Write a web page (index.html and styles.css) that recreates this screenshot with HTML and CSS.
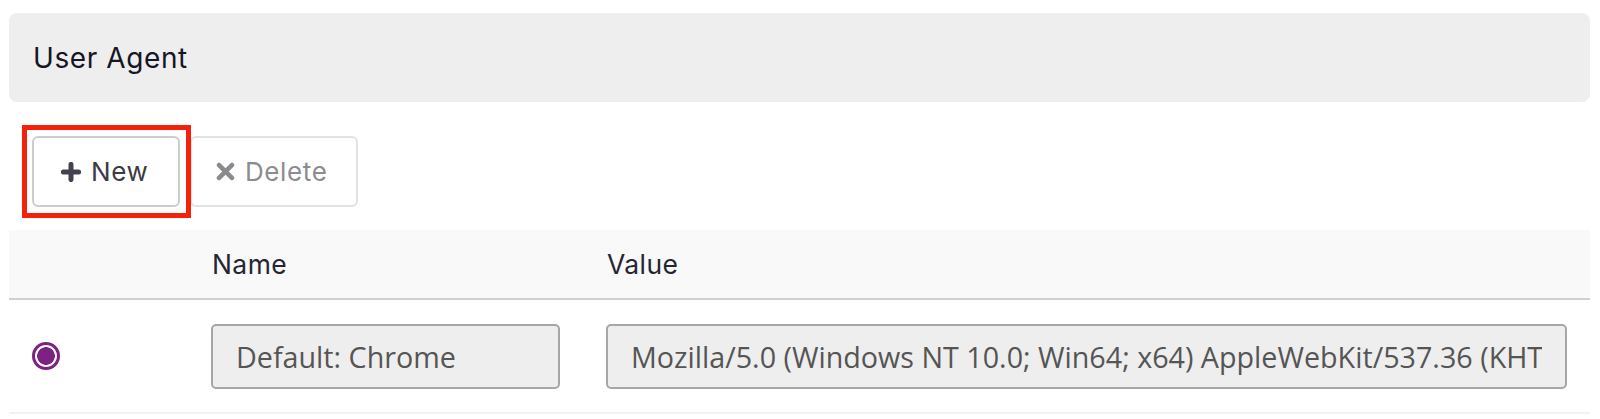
FILE: index.html
```html
<!DOCTYPE html>
<html lang="en">
<head>
<meta charset="utf-8">
<title>User Agent</title>
<link rel="stylesheet" href="styles.css">
</head>
<body>
<div class="page">
  <div class="panel">
    <h2 class="panel-title">User Agent</h2>
  </div>
  <div class="toolbar">
    <button class="btn btn-new" type="button">
      <svg class="icon" viewBox="0 0 20 20" width="20" height="20"><path d="M10 2.4v15.2M2.4 10h15.2" stroke="#43434f" stroke-width="5" stroke-linecap="round" fill="none"/></svg>
      <span>New</span>
    </button>
    <button class="btn btn-delete" type="button" disabled>
      <svg class="icon" viewBox="0 0 20 20" width="19" height="19"><path d="M3.2 3.2l13.6 13.6M16.8 3.2L3.2 16.8" stroke="#8a8a8e" stroke-width="4.8" stroke-linecap="round" fill="none"/></svg>
      <span>Delete</span>
    </button>
  </div>
  <table class="ua-table">
    <thead>
      <tr>
        <th class="col-radio"></th>
        <th class="col-name">Name</th>
        <th class="col-value">Value</th>
      </tr>
    </thead>
    <tbody>
      <tr>
        <td class="col-radio"><span class="radio checked"></span></td>
        <td class="col-name"><input class="field" type="text" value="Default: Chrome" readonly></td>
        <td class="col-value"><input class="field" type="text" value="Mozilla/5.0 (Windows NT 10.0; Win64; x64) AppleWebKit/537.36 (KHTML, like Gecko) Chrome/70.0.3538.77 Safari/537.36" readonly></td>
      </tr>
    </tbody>
  </table>
</div>
</body>
</html>
```

FILE: styles.css
```css
* { box-sizing: border-box; }

body {
  margin: 0;
  background: #ffffff;
  font-family: Inter, Lato, sans-serif;
  color: #1c1c28;
}

.page {
  padding: 13px 10px 0 9px;
}

.panel {
  height: 89px;
  background: #eeeeee;
  border-radius: 8px;
  display: flex;
  align-items: center;
  padding-left: 24px;
}

.panel-title {
  margin: 0;
  font-size: 28px;
  letter-spacing: 0.6px;
  font-weight: 400;
  color: #161625;
}

.toolbar {
  display: flex;
  gap: 10px;
  margin-top: 34px;
  padding-left: 23px;
}

.btn {
  height: 71px;
  display: flex;
  align-items: center;
  gap: 10px;
  background: #ffffff;
  border: 2px solid #d2d2d2;
  border-radius: 6px;
  font-family: Inter, Lato, sans-serif;
  font-size: 26px;
  letter-spacing: 0.6px;
  padding: 0 16px 0 27px;
  color: #3b3b48;
}

.btn-new {
  position: relative;
  width: 148px;
  border-color: #cccccc;
}

.btn-new::after {
  content: "";
  position: absolute;
  left: -12px;
  top: -13px;
  right: -13px;
  bottom: -13px;
  border: 5px solid #f4220b;
  pointer-events: none;
}

.btn-delete {
  width: 168px;
  padding-left: 24px;
  color: #8c8c90;
  border-color: #e2e2e2;
}

.icon { flex: none; }

.ua-table {
  width: 100%;
  margin-top: 23px;
  border-collapse: collapse;
}

.ua-table th {
  height: 69px;
  background: #f9f9f9;
  text-align: left;
  font-weight: 400;
  font-size: 26.5px;
  letter-spacing: 0.4px;
  color: #262633;
  padding: 0 23px 0 24px;
  border-bottom: 2px solid #cfcfcf;
}

.ua-table td {
  height: 114px;
  padding: 0 23px 0 23px;
  border-top: 2px solid #eef1f5;
  border-bottom: 2px solid #eef1f5;
}

.col-radio { width: 179px; }
.col-name { width: 395px; }

td.col-radio { padding-left: 23px; }

.radio {
  display: block;
  width: 28px;
  height: 28px;
  border-radius: 50%;
  border: 3px solid #7d2185;
  background: radial-gradient(circle, #7d2185 0 8.5px, #ffffff 9.1px);
}

.field {
  display: block;
  width: 100%;
  height: 65px;
  background: #eeeeee;
  border: 2px solid #a6a6a6;
  border-radius: 5px;
  padding: 0 23px;
  font-family: "Open Sans", sans-serif;
  font-size: 28.7px;
  color: #555555;
  outline: none;
}
```
